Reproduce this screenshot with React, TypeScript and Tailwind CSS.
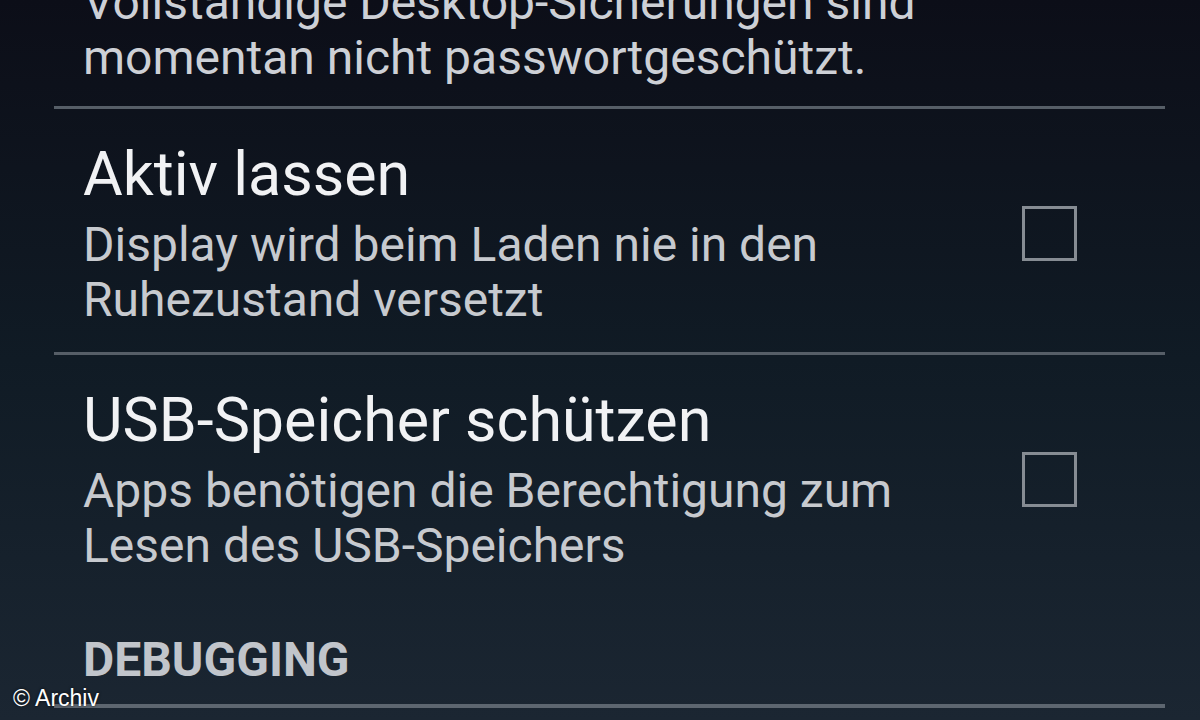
import React from 'react';

const font = { fontFamily: 'Roboto, "Noto Sans", sans-serif' };

function Divider() {
    return <div className="h-[3px] bg-[#565e67]" />;
}

function Checkbox() {
    return <div className="w-[55px] h-[55px] shrink-0 border-[3px] border-[#868c93]" />;
}

interface SettingRowProps {
    title: string;
    lines: string[];
}

function SettingRow({ title, lines }: SettingRowProps) {
    return (
        <div className="flex items-center justify-between pl-[29px] pr-[88px] pt-[30px] pb-[25px]">
            <div className="flex flex-col">
                <div className="text-[61px] leading-[70px] text-[#f1f2f4]">{title}</div>
                <div className="mt-2 text-[48px] leading-[55px] text-[#c7cacf]">
                    {lines.map((l) => (
                        <div key={l}>{l}</div>
                    ))}
                </div>
            </div>
            <Checkbox />
        </div>
    );
}

export default function App() {
    return (
        <div
            className="relative w-full h-[720px] overflow-hidden bg-gradient-to-b from-[#0c0e18] via-[#101b25] to-[#1b2632]"
            style={font}
        >
            <div className="ml-[54px] mr-[35px] flex flex-col">
                {/* previous entry, cut off at the top */}
                <div className="-mt-[25px] pl-[29px] pb-[21px] text-[48px] leading-[55px] text-[#cdd0d6]">
                    <div>Vollständige Desktop-Sicherungen sind</div>
                    <div>momentan nicht passwortgeschützt.</div>
                </div>
                <Divider />
                <SettingRow title="Aktiv lassen" lines={['Display wird beim Laden nie in den', 'Ruhezustand versetzt']} />
                <Divider />
                <SettingRow title="USB-Speicher schützen" lines={['Apps benötigen die Berechtigung zum', 'Lesen des USB-Speichers']} />
                <div className="pl-[29px] pt-[34px] pb-[17px] text-[48px] leading-[55px] font-bold text-[#c1c5cb]">
                    DEBUGGING
                </div>
                <div className="h-[4px] bg-[#5d6670]" />
            </div>
            <div
                className="absolute left-[13px] bottom-[10px] text-[23px] leading-none text-white [text-shadow:0_0_3px_rgba(0,0,0,0.8)]"
                style={{ fontFamily: '"Liberation Sans", Arial, sans-serif' }}
            >
                © Archiv
            </div>
        </div>
    );
}
